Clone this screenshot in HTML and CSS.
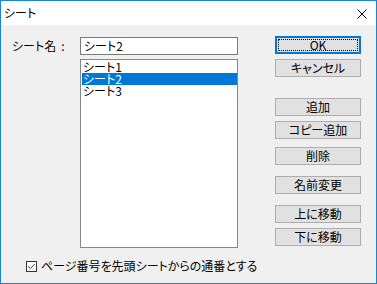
FILE: index.html
```html
<!DOCTYPE html>
<html lang="ja">
<head>
<meta charset="utf-8">
<link rel="stylesheet" href="styles.css">
</head>
<body>
<div class="win">
  <div class="titlebar">
    <span class="title">シート</span>
    <svg class="close" width="10" height="10" viewBox="0 0 10 10"><path d="M0.5 0.5 L9.5 9.5 M9.5 0.5 L0.5 9.5" stroke="#000" stroke-width="1" fill="none"/></svg>
  </div>
  <div class="body">
    <div class="main">
      <div class="left">
        <div class="namerow">
          <span class="lbl">シート名<span class="colon">:</span></span>
          <div class="input">シート2</div>
        </div>
        <div class="list">
          <div class="item">シート1</div>
          <div class="item sel">シート2</div>
          <div class="item">シート3</div>
        </div>
      </div>
      <div class="buttons">
        <div class="btn ok"><span class="focus">OK</span></div>
        <div class="btn">キャンセル</div>
        <div class="btn g1">追加</div>
        <div class="btn">コピー追加</div>
        <div class="btn g2">削除</div>
        <div class="btn g3">名前変更</div>
        <div class="btn g3">上に移動</div>
        <div class="btn">下に移動</div>
      </div>
    </div>
    <div class="check">
      <span class="box"><svg width="11" height="11" viewBox="0 0 11 11"><path d="M1.5 5.5 L4 8 L9.5 2.5" stroke="#333" stroke-width="1.2" fill="none"/></svg></span>
      <span class="ctext">ページ番号を先頭シートからの通番とする</span>
    </div>
  </div>
</div>
</body>
</html>
```
FILE: styles.css
```css
* { box-sizing: border-box; }
html, body { margin: 0; padding: 0; }
body {
  font-family: "Noto Sans CJK JP", "Noto Sans", sans-serif;
  font-size: 12px;
  font-feature-settings: "palt";
  color: #000;
  background: #f0f0f0;
}
.win {
  width: 377px;
  height: 284px;
  border: 1px solid #1883d7;
  background: #f0f0f0;
  display: flex;
  flex-direction: column;
  overflow: hidden;
}
.titlebar {
  flex: 0 0 24px;
  height: 24px;
  background: #fff;
  display: flex;
  align-items: center;
  justify-content: space-between;
  padding: 0 9px 0 3px;
}
.title { line-height: 14px; }
.close { display: block; margin-top: 1px; }
.body {
  padding: 11px 0 0 11px;
  display: flex;
  flex-direction: column;
}
.main { display: flex; }
.left {
  display: flex;
  flex-direction: column;
  gap: 4px;
  margin-top: 1px;
}
.namerow { display: flex; }
.lbl {
  width: 68px;
  line-height: 16px;
  padding-top: 1px;
}
.colon { margin-left: 5px; }
.input {
  width: 158px;
  height: 18px;
  border: 1px solid #7a7a7a;
  background: #fff;
  padding-left: 3px;
  line-height: 16px;
}
.list {
  width: 158px;
  height: 189px;
  margin-left: 68px;
  border: 1px solid #828790;
  background: #fff;
  padding: 1px 0 0 1px;
}
.item {
  height: 12px;
  line-height: 12px;
  padding-left: 1px;
}
.item.sel { background: #0078d7; color: #fff; }
.buttons {
  margin-left: 37px;
  width: 86px;
  display: flex;
  flex-direction: column;
  gap: 5px;
}
.btn {
  flex: 0 0 18px;
  height: 18px;
  border: 1px solid #adadad;
  background: #e1e1e1;
  display: flex;
  align-items: center;
  justify-content: center;
  line-height: 14px;
}
.btn.ok {
  border-color: #0078d7;
  box-shadow: inset 0 0 0 1px #0078d7;
  padding: 2px;
}
.focus {
  width: 100%;
  height: 100%;
  border: 1px dotted #000;
  display: flex;
  align-items: center;
  justify-content: center;
}
.g1 { margin-top: 16px; }
.g2 { margin-top: 3px; }
.g3 { margin-top: 6px; }
.check {
  display: flex;
  align-items: center;
  margin-top: 11px;
  margin-left: 14px;
  height: 14px;
}
.box {
  width: 11px;
  height: 11px;
  border: 1px solid #333;
  background: #fff;
  display: flex;
  align-items: center;
  justify-content: center;
}
.box svg { display: block; width: 9px; height: 9px; }
.ctext { margin-left: 4px; line-height: 14px; }
```
